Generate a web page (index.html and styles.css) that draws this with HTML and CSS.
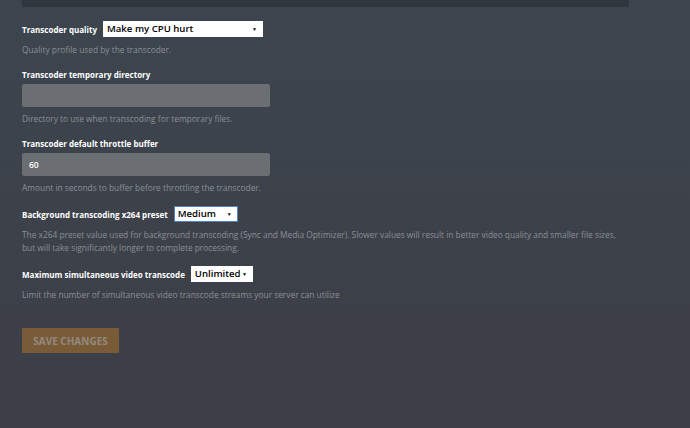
FILE: index.html
```html
<!DOCTYPE html>
<html lang="en">
<head>
    <meta charset="UTF-8">
    <meta name="viewport" content="width=device-width, initial-scale=1.0">
    <title>Transcoder settings</title>
    <link rel="stylesheet" href="styles.css">
</head>
<body>
    <div class="page">
        <div class="top-strip"></div>
        <form class="settings" action="#" method="post">
            <div class="field">
                <div class="inline-row">
                    <label>Transcoder quality</label>
                    <div class="dropdown quality">Make my CPU hurt</div>
                </div>
                <p class="help">Quality profile used by the transcoder.</p>
            </div>

            <div class="field">
                <label for="tempdir">Transcoder temporary directory</label>
                <input type="text" id="tempdir" name="tempdir" value="">
                <p class="help">Directory to use when transcoding for temporary files.</p>
            </div>

            <div class="field">
                <label for="throttle">Transcoder default throttle buffer</label>
                <input type="text" id="throttle" name="throttle" value="60">
                <p class="help">Amount in seconds to buffer before throttling the transcoder.</p>
            </div>

            <div class="field">
                <div class="inline-row">
                    <label>Background transcoding x264 preset</label>
                    <div class="dropdown preset focused">Medium</div>
                </div>
                <p class="help">The x264 preset value used for background transcoding (Sync and Media Optimizer). Slower values will result in better video quality and smaller file sizes, but will take significantly longer to complete processing.</p>
            </div>

            <div class="field">
                <div class="inline-row">
                    <label>Maximum simultaneous video transcode</label>
                    <div class="dropdown maxvideo">Unlimited</div>
                </div>
                <p class="help">Limit the number of simultaneous video transcode streams your server can utilize</p>
            </div>

            <button type="submit" class="save" disabled>Save Changes</button>
        </form>
    </div>
</body>
</html>
```

FILE: styles.css
```css
* {
    margin: 0;
    padding: 0;
    box-sizing: border-box;
}

body {
    min-height: 100vh;
    background: linear-gradient(to bottom, #3c454e, #3d3e46);
    font-family: 'Open Sans', 'Noto Sans', sans-serif;
    color: #fff;
}

.page {
    padding: 0 22px;
}

.top-strip {
    width: 607px;
    height: 7px;
    background: #30363d;
}

.settings {
    padding-top: 14px;
    width: 600px;
}

.field {
    margin-bottom: 12px;
}

label {
    display: block;
    font-size: 8px;
    font-weight: 700;
    line-height: 13px;
    margin-bottom: 3px;
}

.inline-row {
    display: flex;
    align-items: center;
    height: 16px;
}

.inline-row label {
    margin: 0 6px 0 0;
}

.inline-row + .help {
    margin-top: 6px;
}

.dropdown {
    position: relative;
    height: 16px;
    background: #fff;
    border: 1px solid #fff;
    color: #000;
    font-size: 9.6px;
    font-weight: 600;
    line-height: 14px;
    padding-left: 3px;
    white-space: nowrap;
}

.dropdown.focused {
    border-color: #4d82c7;
}

.dropdown::after {
    content: "\25BC";
    position: absolute;
    right: 5px;
    top: 0;
    font-size: 5px;
    line-height: 14px;
    color: #000;
}

.quality { width: 160px; }
.preset { width: 64px; }
.maxvideo { width: 62px; }

input {
    display: block;
    width: 248px;
    height: 23px;
    border: none;
    border-radius: 2px;
    background: #6b6e73;
    color: #fff;
    font-family: 'Open Sans', 'Noto Sans', sans-serif;
    font-size: 8.5px;
    font-weight: 600;
    padding: 0 7px;
}

.help {
    font-size: 8.35px;
    line-height: 13px;
    color: #8b8f95;
    margin-top: 5px;
}

.save {
    margin-top: 15px;
    width: 97px;
    height: 25px;
    border: none;
    border-radius: 1px;
    background: #7a5b37;
    color: #928a80;
    font-family: 'Open Sans', 'Noto Sans', sans-serif;
    font-size: 10px;
    font-weight: 700;
    text-transform: uppercase;
}
```
